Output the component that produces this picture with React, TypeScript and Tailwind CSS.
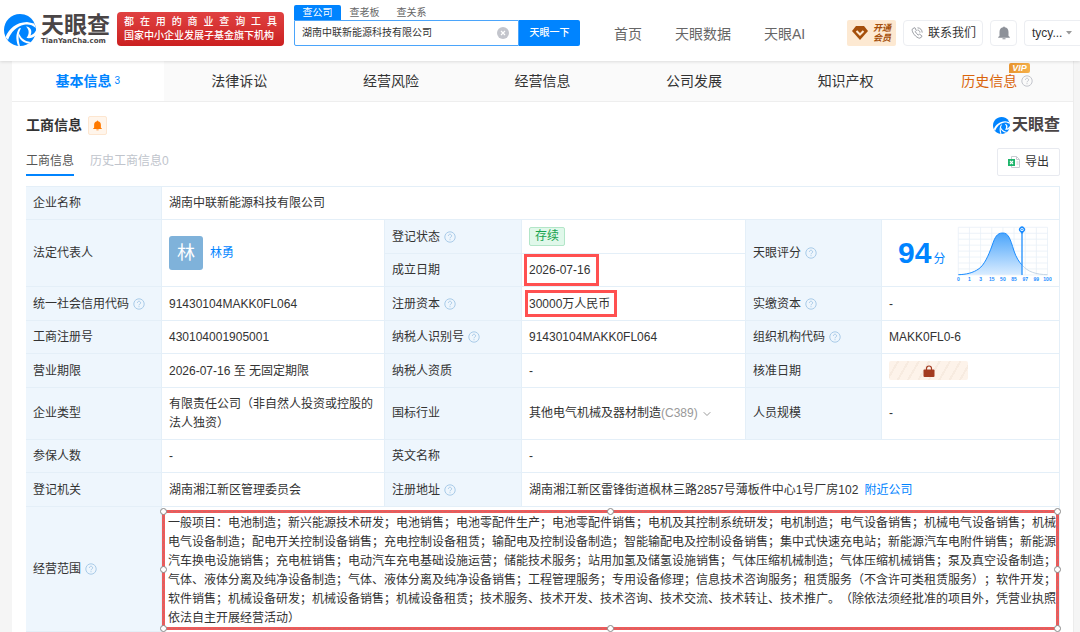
import React, { useState } from 'react';
import { ChevronDown } from 'lucide-react';

const SCOPE =
  '一般项目：电池制造；新兴能源技术研发；电池销售；电池零配件生产；电池零配件销售；电机及其控制系统研发；电机制造；电气设备销售；机械电气设备销售；机械电气设备制造；配电开关控制设备销售；充电控制设备租赁；输配电及控制设备制造；智能输配电及控制设备销售；集中式快速充电站；新能源汽车电附件销售；新能源汽车换电设施销售；充电桩销售；电动汽车充电基础设施运营；储能技术服务；站用加氢及储氢设施销售；气体压缩机械制造；气体压缩机械销售；泵及真空设备制造；气体、液体分离及纯净设备制造；气体、液体分离及纯净设备销售；工程管理服务；专用设备修理；信息技术咨询服务；租赁服务（不含许可类租赁服务）；软件开发；软件销售；机械设备研发；机械设备销售；机械设备租赁；技术服务、技术开发、技术咨询、技术交流、技术转让、技术推广。（除依法须经批准的项目外，凭营业执照依法自主开展经营活动）';

const tabs = ['基本信息', '法律诉讼', '经营风险', '经营信息', '公司发展', '知识产权', '历史信息'];

const scoreTicks = ['0', '1', '3', '15', '50', '85', '97', '99', '100'];

const handles = [
  '-left-[3px] -top-[3px]',
  'left-1/2 -ml-1 -top-[3px]',
  '-right-[3px] -top-[3px]',
  '-left-[3px] top-1/2 -mt-1',
  '-right-[3px] top-1/2 -mt-1',
  '-left-[3px] -bottom-[3px]',
  'left-1/2 -ml-1 -bottom-[3px]',
  '-right-[3px] -bottom-[3px]'
];

const LogoMark: React.FC<{ className: string }> = ({ className }) => (
  <svg viewBox="0 0 32 32" className={className} aria-hidden="true">
    <path
      d="M16 0C22 0 27 3 29.500 7.500C31 10.500 32 13 32 16C32 25 25 32 16 32S0 25 0 16S7 0 16 0z"
      fill="#0084ff"
    />
    {/* upper lid */}
    <path d="M1.500 23C5 14.500 12 8.500 23 8L30 9.500C31 11 31.500 12.500 31.800 14C28 10.500 24 9.800 20 10.800C12.500 12.500 7 18 4 26z" fill="#fff" />
    {/* pupil gap and lashes */}
    <path d="M22 12.500C27 13 28.500 17 26.500 21.500C29 20.500 31 18.500 32 16.500V21C30 23.500 27 24.500 22.500 24C25.500 20 25.500 16 22 12.500z" fill="#fff" />
    <path d="M15 14.500C12 19 11.500 25 14 31.800L16 32C14 25 14 20 17 14z" fill="#fff" />
    <path d="M15 19.500C17 24 20 27 26.500 28L25 29.500C19 29 15.500 25.500 14.500 21z" fill="#fff" />
  </svg>
);

const BellIcon: React.FC<{ className: string }> = ({ className }) => (
  <svg viewBox="0 0 12 14" className={className} fill="currentColor">
    <path d="M5.200 1.200a.8.8 0 0 1 1.600 0C9.300 1.600 10.500 3.500 10.500 6v4l1.300 1v.8H.2V11l1.300-1V6c0-2.500 1.200-4.400 3.700-4.800zM4.500 12.300h3v1h-3z" />
  </svg>
);

const Help: React.FC<{ className?: string }> = ({ className = 'text-[#a9cbe8]' }) => (
  <svg viewBox="0 0 12 12" className={`ml-1 h-3 w-3 shrink-0 ${className}`} fill="none" stroke="currentColor">
    <circle cx="6" cy="6" r="5.200" />
    <path d="M4.400 4.800a1.600 1.600 0 1 1 2.400 1.400c-.6.300-.8.500-.8 1.100M6 8.200v1" />
  </svg>
);

const ScoreChart: React.FC = () => (
  <svg viewBox="0 0 98 60" className="h-[60px] w-[98px] shrink-0">
    <defs>
      <linearGradient id="score" x1="0" y1="0" x2="0" y2="1">
        <stop offset="0" stopColor="#4ba5fb" />
        <stop offset="1" stopColor="#d9ecff" />
      </linearGradient>
    </defs>
    <g stroke="#e9f0f7" strokeWidth=".8">
      {scoreTicks.map((t, i) => (
        <path key={t} d={`M${4.3 + i * 11.15} 4.300V52`} />
      ))}
      {scoreTicks.map((t, i) => (
        <path key={t} d={`M4.300 ${4.3 + i * 5.95}H93.500`} />
      ))}
    </g>
    <path
      d="M4.300 51.700C12 51.500 19 50 25 45.700C30 42 34 34 38.300 22C41 14 43 10 48.700 10S56 15 60 28C62 34 65 39 68 42V51.700z"
      fill="url(#score)"
    />
    <path
      d="M4.300 51.700C12 51.500 19 50 25 45.700C30 42 34 34 38.300 22C41 14 43 10 48.700 10S56 15 60 28C62 34 65 39 68 42"
      fill="none"
      stroke="#1a8cff"
    />
    <path d="M68 42C74 49 82 51.500 93.500 51.700" fill="none" stroke="#c5d6e6" />
    <path d="M68 8V52" stroke="#3d9dfc" strokeWidth="1.500" />
    <path d="M68 11l-2-2.200a3 3 0 1 1 4 0z" fill="#1a8cff" />
    <circle cx="68" cy="6.500" r="1.600" fill="#fff" />
    <circle cx="68" cy="6.500" r=".8" fill="#1a8cff" />
    <g fill="#1a8cff" fontSize="5" fontWeight="700" textAnchor="middle">
      {scoreTicks.map((t, i) => (
        <text key={t} x={4.3 + i * 11.15} y="58">
          {t}
        </text>
      ))}
    </g>
  </svg>
);

const Label: React.FC<{ children: React.ReactNode; help?: boolean; rowSpan?: number }> = ({
  children,
  help,
  rowSpan
}) => (
  <th
    scope="row"
    rowSpan={rowSpan}
    className="border-b border-r border-[#e4eff8] bg-[#eef6fd] px-[7px] text-left font-normal"
  >
    <span className="flex items-center">
      {children}
      {help && <Help />}
    </span>
  </th>
);

const Value: React.FC<{ children: React.ReactNode; colSpan?: number; rowSpan?: number }> = ({
  children,
  colSpan,
  rowSpan
}) => (
  <td colSpan={colSpan} rowSpan={rowSpan} className="border-b border-r border-[#e4eff8] px-[7px]">
    {children}
  </td>
);

const Header: React.FC = () => {
  const [keyword, setKeyword] = useState('湖南中联新能源科技有限公司');

  return (
    <header className="relative z-10 flex h-[61px] items-start bg-white shadow-[0_1px_3px_rgba(0,0,0,0.12)]">
      <a href="#home" className="ml-1 mt-3.5 flex shrink-0 items-center gap-[5px]">
        <LogoMark className="h-8 w-8" />
        <span className="flex flex-col text-[#4a4546]">
          <span className="text-[23px] font-bold leading-[23px]">天眼查</span>
          <span className="font-['DejaVu_Sans'] text-[7px] font-bold leading-[9px]">TianYanCha.com</span>
        </span>
      </a>
      <div className="ml-[7px] mt-3 w-[167px] shrink-0 rounded-sm bg-linear-to-b from-[#e04141] to-[#cb1f20] px-[7px] py-[3px] text-[10px] font-medium leading-[14px] text-white">
        <p className="[text-align-last:justify]">都在用的商业查询工具</p>
        <p className="whitespace-nowrap">国家中小企业发展子基金旗下机构</p>
      </div>

      <form className="ml-2.5 mt-[5px] w-[286px] shrink-0 text-[10px]" onSubmit={(e) => e.preventDefault()}>
        <div className="flex h-[15px] text-[#666]">
          <button type="button" className="w-[47px] rounded-t-xs bg-[#0084ff] text-white">
            查公司
          </button>
          <button type="button" className="w-[47px]">
            查老板
          </button>
          <button type="button" className="w-[47px]">
            查关系
          </button>
        </div>
        <div className="flex h-[26px]">
          <div className="flex flex-1 items-center rounded-bl-xs border border-[#4ba5fb] px-[7px]">
            <input
              aria-label="搜索公司"
              className="w-full min-w-0 text-[#333] outline-none"
              value={keyword}
              onChange={(e) => setKeyword(e.target.value)}
            />
            <button type="button" aria-label="清空" onClick={() => setKeyword('')}>
              <svg viewBox="0 0 12 12" className="mr-0.5 h-3 w-3">
                <circle cx="6" cy="6" r="6" fill="#c3c5cc" />
                <path d="M4 4l4 4M8 4L4 8" stroke="#fff" strokeWidth="1.200" />
              </svg>
            </button>
          </div>
          <button type="submit" className="w-[61px] rounded-r-xs bg-[#0084ff] font-medium text-white">
            天眼一下
          </button>
        </div>
      </form>

      <nav className="ml-[34px] mt-6 flex shrink-0 gap-[33px] text-sm text-[#666]">
        <a href="#index">首页</a>
        <a href="#data">天眼数据</a>
        <a href="#ai">天眼AI</a>
      </nav>

      <div className="ml-auto mt-5 flex h-[26px] shrink-0 gap-[7px] text-xs text-[#333]">
        <button className="flex w-[49px] items-center gap-[5px] rounded-xs bg-[#fde9d2] pl-[5px] text-[#a54f0b]">
          <svg viewBox="0 0 16 14" className="h-3.5 w-4">
            <path d="M4 0h8l4 5-8 9-8-9z" fill="#a54f0b" />
            <path d="M4.500 5L8 8.500 11.500 5" fill="none" stroke="#fde9d2" strokeWidth="2" />
          </svg>
          <span className="text-[9px] font-bold italic leading-[10px]">
            开通
            <br />
            会员
          </span>
        </button>
        <button className="flex w-20 items-center gap-[5px] rounded-sm border border-[#eceef2] pl-[7px]">
          <svg viewBox="0 0 12 12" className="h-3 w-3" fill="none" stroke="#999ca3">
            <path d="M3.200.8L1.200 2.200C.5 5 5 11 8.800 11.200l2-1.400v-1L8.600 7.200l-1.400.8C6 7.200 4.800 5.800 4.300 4.600l1-1L4 .8zM6.500 3c1.500.2 2.300 1 2.500 2.600M6.500.8c3 .2 4.500 2 4.700 4.800" />
          </svg>
          联系我们
        </button>
        <button aria-label="消息" className="flex w-[27px] items-center justify-center rounded-sm border border-[#eceef2]">
          <BellIcon className="h-3.5 w-3 text-[#8d9199]" />
        </button>
        <button className="flex w-[56px] items-center gap-1 rounded-l-sm border border-r-0 border-[#eceef2] pl-[7px]">
          tycy...
          <svg viewBox="0 0 6 4" className="h-1 w-1.5" fill="#999">
            <path d="M0 0h6L3 3.500z" />
          </svg>
        </button>
      </div>
    </header>
  );
};

const App: React.FC = () => (
  <div className="min-h-screen bg-[#f5f5f5] font-['Liberation_Sans','Noto_Sans_CJK_SC',sans-serif] text-xs text-[#333]">
    <Header />

    <main className="ml-3 mr-1.5 border-r border-[#ececec] bg-white">
      <nav className="grid h-[41px] grid-cols-7 border-b border-[#eee] text-sm">
        {tabs.map((tab, i) => (
          <a
            key={tab}
            href={`#tab-${i}`}
            className={
              i === 0
                ? 'flex items-center justify-center font-bold text-[#0084ff]'
                : i === 6
                  ? 'flex items-center justify-center bg-[#fafafa] text-[#d9640b]'
                  : 'flex items-center justify-center bg-[#fafafa]'
            }
          >
            {tab}
            {i === 0 && <span className="ml-[3px] text-[10px] font-normal">3</span>}
            {i === 6 && (
              <span className="relative">
                <Help className="text-[#c3c5cc]" />
                <span className="absolute -top-3 -left-2 rounded-xs rounded-bl-none bg-linear-to-r from-[#e8942f] to-[#f5b04a] px-[3px] text-[9px] font-black italic leading-[10px] text-white">
                  VIP
                </span>
              </span>
            )}
          </a>
        ))}
      </nav>

      <section className="pl-3.5 pr-[13px]">
        <div className="flex items-center justify-between pt-[13px]">
          <h2 className="flex items-center gap-1.5 text-sm font-bold">
            工商信息
            <button
              aria-label="订阅提醒"
              className="flex h-[19px] w-[19px] items-center justify-center rounded-xs border border-[#fde6d0] bg-[#fff5eb]"
            >
              <BellIcon className="h-[11px] w-[9px] text-[#ff7a00]" />
            </button>
          </h2>
          <span className="flex items-center gap-0.5 text-base font-bold leading-5 text-[#4a4546]">
            <LogoMark className="h-[17px] w-[17px]" />
            天眼查
          </span>
        </div>

        <div className="mb-2.5 mt-[13px] flex items-start justify-between">
          <div className="flex gap-4">
            <button className="h-7 border-b-2 border-[#0084ff] text-[#555]">工商信息</button>
            <button className="h-7 border-b-2 border-transparent text-[#c0c4cc]">历史工商信息0</button>
          </div>
          <button className="flex h-7 w-[63px] items-center justify-center gap-[5px] rounded-xs border border-[#e8eaf0]">
            <svg viewBox="0 0 12 12" className="h-3 w-3">
              <path d="M3.500.5h5l3 3v8h-8z" fill="#fff" stroke="#c8ccd2" />
              <path d="M8.500.5v3h3M8.500 6h2M8.500 8h2" fill="none" stroke="#c8ccd2" />
              <path d="M0 3h7v7H0z" fill="#1fb56c" />
              <path d="M2 5l3 3M5 5L2 8" stroke="#fff" strokeWidth="1.100" />
            </svg>
            导出
          </button>
        </div>

        <table className="w-full table-fixed border-separate border-spacing-0 border-t border-[#e4eff8]">
          <colgroup>
            <col className="w-[136px]" />
            <col className="w-[223px]" />
            <col className="w-[137px]" />
            <col />
            <col className="w-[136px]" />
            <col className="w-[178px]" />
          </colgroup>
          <tbody>
            <tr className="h-[33px]">
              <Label>企业名称</Label>
              <Value colSpan={5}>湖南中联新能源科技有限公司</Value>
            </tr>
            <tr className="h-[34px]">
              <Label rowSpan={2}>法定代表人</Label>
              <Value rowSpan={2}>
                <span className="flex items-center gap-[7px]">
                  <span className="flex h-[34px] w-[34px] items-center justify-center rounded-[3px] bg-[#7fb2da] text-lg text-white">
                    林
                  </span>
                  <a href="#person" className="text-[#0084ff]">
                    林勇
                  </a>
                </span>
              </Value>
              <Label help>登记状态</Label>
              <Value>
                <span className="inline-block rounded-xs border border-[#b3e6c8] bg-[#e0f8ea] px-[5px] leading-[17px] text-[#17a34f]">
                  存续
                </span>
              </Value>
              <Label rowSpan={2} help>
                天眼评分
              </Label>
              <Value rowSpan={2}>
                <span className="flex items-center justify-between pl-[9px] text-[#0084ff]">
                  <span className="whitespace-nowrap">
                    <b className="mr-0.5 text-[30px] leading-8">94</b>分
                  </span>
                  <ScoreChart />
                </span>
              </Value>
            </tr>
            <tr className="h-[33px]">
              <Label>成立日期</Label>
              <Value>
                <span className="relative">
                  2026-07-16
                  <span className="absolute -left-[5px] -top-[9px] h-[32px] w-[75px] border-[3px] border-[#ff5050]" />
                </span>
              </Value>
            </tr>
            <tr className="h-[34px]">
              <Label help>统一社会信用代码</Label>
              <Value>91430104MAKK0FL064</Value>
              <Label help>注册资本</Label>
              <Value>
                <span className="relative">
                  30000万人民币
                  <span className="absolute -left-1 -top-[7px] h-[27px] w-[92px] border-[3px] border-[#ff5050]" />
                </span>
              </Value>
              <Label help>实缴资本</Label>
              <Value>-</Value>
            </tr>
            <tr className="h-[33px]">
              <Label>工商注册号</Label>
              <Value>430104001905001</Value>
              <Label help>纳税人识别号</Label>
              <Value>91430104MAKK0FL064</Value>
              <Label help>组织机构代码</Label>
              <Value>MAKK0FL0-6</Value>
            </tr>
            <tr className="h-[34px]">
              <Label>营业期限</Label>
              <Value>2026-07-16 至 无固定期限</Value>
              <Label>纳税人资质</Label>
              <Value>-</Value>
              <Label>核准日期</Label>
              <Value>
                <button
                  aria-label="查看核准日期"
                  className="flex h-[19px] w-[79px] items-center justify-center rounded-xs bg-[repeating-linear-gradient(120deg,#fdf3ea_0_7px,#f7ebe0_7px_9px)]"
                >
                  <svg viewBox="0 0 12 12" className="h-3 w-3">
                    <path d="M3.500 5V3.500a2.500 2.500 0 0 1 5 0V5" fill="none" stroke="#a33b20" strokeWidth="1.200" />
                    <rect x=".5" y="4.500" width="11" height="7.500" rx="1" fill="#a33b20" />
                  </svg>
                </button>
              </Value>
            </tr>
            <tr className="h-[52px] leading-[19px]">
              <Label>企业类型</Label>
              <Value>有限责任公司（非自然人投资或控股的法人独资）</Value>
              <Label>国标行业</Label>
              <Value>
                <span className="flex items-center whitespace-nowrap">
                  其他电气机械及器材制造<span className="text-[#999]">(C389)</span>
                  <ChevronDown size={12} className="ml-[3px] text-[#999]" />
                </span>
              </Value>
              <Label>人员规模</Label>
              <Value>-</Value>
            </tr>
            <tr className="h-[33px]">
              <Label>参保人数</Label>
              <Value>-</Value>
              <Label>英文名称</Label>
              <Value colSpan={3}>-</Value>
            </tr>
            <tr className="h-[34px]">
              <Label>登记机关</Label>
              <Value>湖南湘江新区管理委员会</Value>
              <Label help>注册地址</Label>
              <Value colSpan={3}>
                湖南湘江新区雷锋街道枫林三路2857号薄板件中心1号厂房102
                <a href="#nearby" className="ml-1.5 text-[#0084ff]">
                  附近公司
                </a>
              </Value>
            </tr>
            <tr className="h-[125px]">
              <Label help>经营范围</Label>
              <td
                colSpan={5}
                className="relative border-r border-[#e4eff8] pl-1.5 pr-0.5 pt-0.5 leading-[19px] [text-spacing-trim:space-all]"
              >
                {SCOPE}
                <div className="pointer-events-none absolute bottom-0.5 left-0 right-0 top-[3px] border-[3px] border-[#f05a5a]">
                  <div className="absolute -inset-0.5 border border-dashed border-[#c46a6a]" />
                  <div className="absolute -inset-0.5">
                    {handles.map((pos) => (
                      <span key={pos} className={`absolute h-[7px] w-[7px] rounded-full border border-[#888] bg-white ${pos}`} />
                    ))}
                  </div>
                </div>
              </td>
            </tr>
          </tbody>
        </table>
      </section>
    </main>
  </div>
);

export default App;
